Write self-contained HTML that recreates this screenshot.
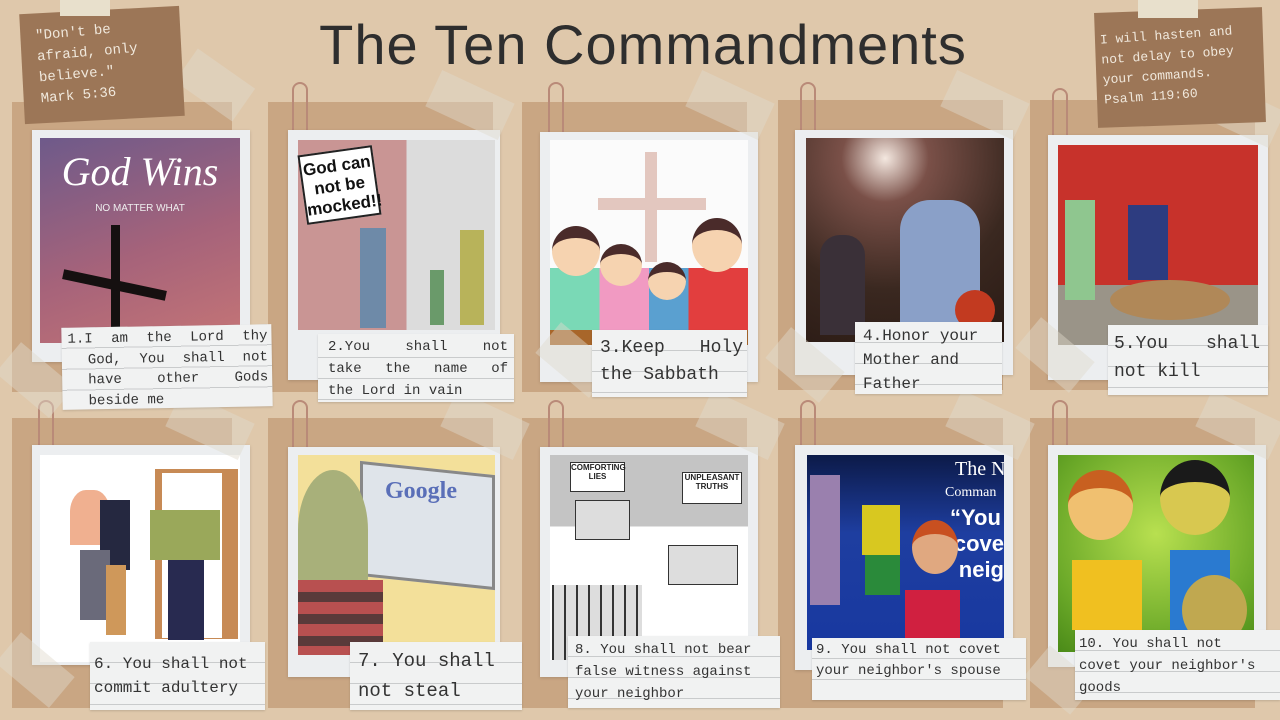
<!DOCTYPE html>
<html><head><meta charset="utf-8"><style>
*{margin:0;padding:0;box-sizing:border-box}
body{width:1280px;height:720px;overflow:hidden;background:#dfc8ab;position:relative;font-family:"Liberation Mono",monospace}
div{position:absolute}
.pn{background:#c9a683;}
.fr{background:#eceef0;box-shadow:0 1px 3px rgba(0,0,0,.15)}
.lb{background:#f1f2f2;color:#333;box-shadow:0 1px 2px rgba(0,0,0,.15);background-image:repeating-linear-gradient(to bottom,transparent 0,transparent 20px,#c9cbcc 20px,#c9cbcc 21px)}
.lb p{text-align:justify;text-align-last:justify;white-space:nowrap}
.tp{background:rgba(225,218,205,.45)}
.clip{border:2px solid #b98a78;border-radius:10px 10px 0 0;border-bottom:none}
</style></head><body>
<!-- panels -->
<div class="pn" style="left:12px;top:102px;width:220px;height:290px"></div>
<div class="pn" style="left:268px;top:102px;width:225px;height:290px"></div>
<div class="pn" style="left:522px;top:102px;width:225px;height:290px"></div>
<div class="pn" style="left:778px;top:100px;width:225px;height:290px"></div>
<div class="pn" style="left:1030px;top:100px;width:225px;height:290px"></div>
<div class="pn" style="left:12px;top:418px;width:220px;height:290px"></div>
<div class="pn" style="left:268px;top:418px;width:225px;height:290px"></div>
<div class="pn" style="left:522px;top:418px;width:225px;height:290px"></div>
<div class="pn" style="left:778px;top:418px;width:225px;height:290px"></div>
<div class="pn" style="left:1030px;top:418px;width:225px;height:290px"></div>
<!-- clips -->
<div class="clip" style="left:292px;top:82px;width:16px;height:50px"></div>
<div class="clip" style="left:548px;top:82px;width:16px;height:50px"></div>
<div class="clip" style="left:800px;top:82px;width:16px;height:50px"></div>
<div class="clip" style="left:1052px;top:88px;width:16px;height:50px"></div>
<div class="clip" style="left:38px;top:400px;width:16px;height:50px"></div>
<div class="clip" style="left:292px;top:400px;width:16px;height:50px"></div>
<div class="clip" style="left:548px;top:400px;width:16px;height:50px"></div>
<div class="clip" style="left:800px;top:400px;width:16px;height:50px"></div>
<div class="clip" style="left:1052px;top:400px;width:16px;height:50px"></div>
<!-- frames row 1 -->
<div class="fr" style="left:32px;top:130px;width:218px;height:232px"></div>
<div class="fr" style="left:288px;top:130px;width:212px;height:250px"></div>
<div class="fr" style="left:540px;top:132px;width:218px;height:250px"></div>
<div class="fr" style="left:795px;top:130px;width:218px;height:245px"></div>
<div class="fr" style="left:1048px;top:135px;width:220px;height:245px"></div>
<!-- images row1 -->
<div style="left:40px;top:138px;width:200px;height:205px;background:linear-gradient(160deg,#6e5a8a,#a6637a 55%,#c57576)"></div>
<div style="left:40px;top:148px;width:200px;color:#fff;font:italic 40px 'Liberation Serif',serif;text-align:center;white-space:nowrap">God Wins</div>
<div style="left:40px;top:203px;width:200px;color:#eee;font:10px 'Liberation Sans',sans-serif;text-align:center">NO MATTER WHAT</div>
<div style="left:111px;top:225px;width:9px;height:118px;background:#151010"></div>
<div style="left:62px;top:280px;width:105px;height:10px;background:#151010;transform:rotate(12deg)"></div>
<div style="left:298px;top:140px;width:197px;height:190px;background:linear-gradient(90deg,#c99594 0,#c99594 55%,#dcdcdc 55%)"></div>
<div style="left:302px;top:150px;width:75px;height:70px;background:#fff;border:2px solid #222;transform:rotate(-8deg);font:bold 17px 'Liberation Sans',sans-serif;color:#111;text-align:center;line-height:20px;padding-top:4px">God can not be mocked!!</div>
<div style="left:360px;top:228px;width:26px;height:100px;background:#6e8aa8"></div>
<div style="left:460px;top:230px;width:24px;height:95px;background:#b8b35a"></div>
<div style="left:430px;top:270px;width:14px;height:55px;background:#6a9a6a"></div>
<div style="left:550px;top:140px;width:198px;height:205px;background:#fbfbfb"></div>
<div style="left:645px;top:152px;width:12px;height:110px;background:#e3c7bf"></div>
<div style="left:598px;top:198px;width:108px;height:12px;background:#e3c7bf"></div>
<div style="left:550px;top:268px;width:198px;height:62px;background:linear-gradient(90deg,#7ad9b6 0,#7ad9b6 25%,#f19ac2 25%,#f19ac2 50%,#5aa0d0 50%,#5aa0d0 70%,#e23e3e 70%)"></div>
<div style="left:552px;top:226px;width:48px;height:50px;border-radius:50%;background:#f6d3b0;border-top:12px solid #4a2b2a"></div>
<div style="left:600px;top:244px;width:42px;height:42px;border-radius:50%;background:#f6d3b0;border-top:10px solid #4a2b2a"></div>
<div style="left:648px;top:262px;width:38px;height:38px;border-radius:50%;background:#f6d3b0;border-top:10px solid #4a2b2a"></div>
<div style="left:692px;top:218px;width:50px;height:54px;border-radius:50%;background:#f6d3b0;border-top:12px solid #4a2b2a"></div>
<div style="left:550px;top:330px;width:198px;height:15px;background:#a8662a"></div>
<div style="left:806px;top:138px;width:198px;height:204px;background:radial-gradient(circle at 40% 10%,#f4e8e0 0,#7a5048 20%,#3a2820 60%,#2a1a14)"></div>
<div style="left:900px;top:200px;width:80px;height:130px;background:#8aa0c8;border-radius:30px 30px 0 0"></div>
<div style="left:820px;top:235px;width:45px;height:100px;background:#3a3038;border-radius:20px 20px 0 0"></div>
<div style="left:955px;top:290px;width:40px;height:40px;border-radius:50%;background:#c23a20"></div>
<div style="left:1058px;top:145px;width:200px;height:200px;background:linear-gradient(#c7322b 0,#c7322b 70%,#9a9488 70%)"></div>
<div style="left:1065px;top:200px;width:30px;height:100px;background:#8fc68f"></div>
<div style="left:1128px;top:205px;width:40px;height:75px;background:#2d3c80"></div>
<div style="left:1110px;top:280px;width:120px;height:40px;background:#b08858;border-radius:50%"></div>
<!-- frames row2 -->
<div class="fr" style="left:32px;top:445px;width:218px;height:220px"></div>
<div class="fr" style="left:288px;top:447px;width:212px;height:230px"></div>
<div class="fr" style="left:540px;top:447px;width:218px;height:230px"></div>
<div class="fr" style="left:795px;top:445px;width:218px;height:225px"></div>
<div class="fr" style="left:1048px;top:445px;width:218px;height:222px"></div>
<!-- images row2 -->
<div style="left:40px;top:455px;width:200px;height:207px;background:#fff"></div>
<div style="left:155px;top:469px;width:83px;height:170px;background:#c78a55"></div>
<div style="left:162px;top:473px;width:60px;height:165px;background:#fff"></div>
<div style="left:150px;top:510px;width:70px;height:50px;background:#9aa85a"></div>
<div style="left:168px;top:560px;width:36px;height:80px;background:#282a50"></div>
<div style="left:70px;top:490px;width:40px;height:55px;background:#f0b090;border-radius:40% 40% 0 0"></div>
<div style="left:100px;top:500px;width:30px;height:70px;background:#252840"></div>
<div style="left:80px;top:550px;width:30px;height:70px;background:#6a6a7a"></div>
<div style="left:106px;top:565px;width:20px;height:70px;background:#cf985a"></div>
<div style="left:298px;top:455px;width:197px;height:200px;background:#f3e09a"></div>
<div style="left:360px;top:468px;width:135px;height:115px;background:#dfe4ea;border:3px solid #888;transform:skewY(6deg)"></div>
<div style="left:385px;top:478px;color:#5a6fb8;font:bold 24px 'Liberation Serif',serif">Google</div>
<div style="left:298px;top:470px;width:70px;height:120px;background:#a8b07a;border-radius:50% 50% 10% 10%"></div>
<div style="left:298px;top:580px;width:85px;height:75px;background:repeating-linear-gradient(#b85050 0,#b85050 12px,#5a3a3a 12px,#5a3a3a 22px)"></div>
<div style="left:550px;top:455px;width:198px;height:205px;background:linear-gradient(#c4c4c4 0,#c4c4c4 35%,#fff 35%)"></div>
<div style="left:570px;top:462px;width:55px;height:30px;background:#fff;border:1px solid #333;font:bold 8px 'Liberation Sans';text-align:center;color:#222">COMFORTING LIES</div>
<div style="left:682px;top:472px;width:60px;height:32px;background:#fff;border:1px solid #333;font:bold 8px 'Liberation Sans';text-align:center;color:#222">UNPLEASANT TRUTHS</div>
<div style="left:575px;top:500px;width:55px;height:40px;background:#ddd;border:1px solid #333"></div>
<div style="left:668px;top:545px;width:70px;height:40px;background:#ddd;border:1px solid #333"></div>
<div style="left:552px;top:585px;width:90px;height:75px;background:repeating-linear-gradient(90deg,#333 0,#333 2px,#ddd 2px,#ddd 12px)"></div>
<div style="left:807px;top:455px;width:197px;height:195px;background:linear-gradient(#0c1a48,#1e3ea0 40%,#1838a0)"></div>
<div style="left:955px;top:458px;color:#fff;font:20px 'Liberation Serif',serif;width:49px;overflow:hidden;white-space:nowrap">The Ni</div>
<div style="left:945px;top:485px;color:#fff;font:14px 'Liberation Serif',serif;width:59px;overflow:hidden;white-space:nowrap">Comman</div>
<div style="left:950px;top:505px;color:#fff;font:bold 22px 'Liberation Sans',sans-serif;line-height:26px;text-align:right;width:54px;overflow:hidden;white-space:nowrap">“You sh<br>cove<br>neig</div>
<div style="left:810px;top:475px;width:30px;height:130px;background:#9a80ae"></div>
<div style="left:862px;top:505px;width:38px;height:50px;background:#d8c820"></div>
<div style="left:865px;top:555px;width:35px;height:40px;background:#2a8a3a"></div>
<div style="left:912px;top:520px;width:46px;height:54px;border-radius:50%;background:#e0a880;border-top:14px solid #c85020"></div>
<div style="left:905px;top:590px;width:55px;height:60px;background:#d02040"></div>
<div style="left:1058px;top:455px;width:196px;height:197px;background:radial-gradient(circle at 50% 40%,#b8e050,#6aa828 70%,#4a8a18)"></div>
<div style="left:1068px;top:470px;width:65px;height:70px;border-radius:50%;background:#f0c070;border-top:18px solid #c86020"></div>
<div style="left:1160px;top:460px;width:70px;height:75px;border-radius:50%;background:#d8c850;border-top:22px solid #1a1a1a"></div>
<div style="left:1072px;top:560px;width:70px;height:70px;background:#f0c020"></div>
<div style="left:1170px;top:550px;width:60px;height:80px;background:#2a7ad0"></div>
<div style="left:1182px;top:575px;width:65px;height:70px;border-radius:50%;background:#c0a850"></div>
<!-- tape -->
<div class="tp" style="left:180px;top:65px;width:70px;height:40px;transform:rotate(35deg)"></div>
<div class="tp" style="left:430px;top:85px;width:80px;height:40px;transform:rotate(25deg)"></div>
<div class="tp" style="left:690px;top:85px;width:80px;height:40px;transform:rotate(25deg)"></div>
<div class="tp" style="left:945px;top:85px;width:80px;height:40px;transform:rotate(25deg)"></div>
<div class="tp" style="left:1210px;top:95px;width:70px;height:40px;transform:rotate(25deg)"></div>
<div class="tp" style="left:170px;top:405px;width:80px;height:40px;transform:rotate(25deg)"></div>
<div class="tp" style="left:445px;top:405px;width:80px;height:40px;transform:rotate(25deg)"></div>
<div class="tp" style="left:700px;top:405px;width:80px;height:40px;transform:rotate(25deg)"></div>
<div class="tp" style="left:950px;top:405px;width:80px;height:40px;transform:rotate(25deg)"></div>
<div class="tp" style="left:1200px;top:405px;width:80px;height:40px;transform:rotate(25deg)"></div>
<div class="tp" style="left:0px;top:360px;width:70px;height:40px;transform:rotate(40deg)"></div>
<div class="tp" style="left:0px;top:650px;width:70px;height:40px;transform:rotate(40deg)"></div>
<div class="tp" style="left:770px;top:345px;width:70px;height:40px;transform:rotate(40deg)"></div>
<div class="tp" style="left:1020px;top:335px;width:70px;height:40px;transform:rotate(40deg)"></div>
<div class="tp" style="left:540px;top:340px;width:70px;height:40px;transform:rotate(40deg)"></div>
<div class="tp" style="left:1030px;top:660px;width:60px;height:40px;transform:rotate(40deg)"></div>
<!-- labels -->
<div class="lb" style="left:62px;top:326px;width:210px;height:82px;font-size:14px;line-height:20.5px;padding:2px 4px 0 6px;transform:rotate(-1deg)"><p>1.I am the Lord thy</p><p style="padding-left:20px">God, You shall not</p><p style="padding-left:20px">have other Gods</p><p style="padding-left:20px;text-align-last:left">beside me</p></div>
<div class="lb" style="left:318px;top:334px;width:196px;height:68px;font-size:14px;line-height:22px;padding:2px 6px 0 10px;background-position:0 3px"><p>2.You shall not</p><p>take the name of</p><p style="text-align-last:left">the Lord in vain</p></div>
<div class="lb" style="left:592px;top:330px;width:155px;height:67px;font-size:18px;line-height:27px;padding:5px 4px 0 8px"><p>3.Keep Holy</p><p style="text-align-last:left">the Sabbath</p></div>
<div class="lb" style="left:855px;top:322px;width:147px;height:72px;font-size:16px;line-height:24px;padding:2px 4px 0 8px"><p style="text-align-last:left">4.Honor your</p><p style="text-align-last:left">Mother and</p><p style="text-align-last:left">Father</p></div>
<div class="lb" style="left:1108px;top:325px;width:160px;height:70px;font-size:18px;line-height:28px;padding:5px 8px 0 6px"><p>5.You shall</p><p style="text-align-last:left">not kill</p></div>
<div class="lb" style="left:90px;top:642px;width:175px;height:68px;font-size:16px;line-height:24px;padding:10px 4px 0 4px"><p style="text-align-last:left">6. You shall not</p><p style="text-align-last:left">commit adultery</p></div>
<div class="lb" style="left:350px;top:642px;width:172px;height:68px;font-size:19px;line-height:30px;padding:4px 4px 0 8px"><p style="text-align-last:left">7. You shall</p><p style="text-align-last:left">not steal</p></div>
<div class="lb" style="left:568px;top:636px;width:212px;height:72px;font-size:14px;line-height:22px;padding:3px 4px 0 7px"><p style="text-align-last:left">8. You shall not bear</p><p style="text-align-last:left">false witness against</p><p style="text-align-last:left">your neighbor</p></div>
<div class="lb" style="left:812px;top:638px;width:214px;height:62px;font-size:14px;line-height:21px;padding:2px 2px 0 4px"><p style="text-align-last:left">9. You shall not covet</p><p style="text-align-last:left">your neighbor's spouse</p></div>
<div class="lb" style="left:1075px;top:630px;width:205px;height:70px;font-size:14px;line-height:22px;padding:3px 2px 0 4px"><p style="text-align-last:left">10. You shall not</p><p style="text-align-last:left">covet your neighbor's</p><p style="text-align-last:left">goods</p></div>
<!-- quote notes -->
<div style="left:22px;top:10px;width:160px;height:110px;background:#9c7657;transform:rotate(-3deg)"></div>
<div style="left:60px;top:0px;width:50px;height:16px;background:#e8e0cc"></div>
<div style="left:38px;top:22px;color:#f0e8dc;font-size:14px;line-height:21px;transform:rotate(-5deg)">"Don't be<br>afraid, only<br>believe."<br>Mark 5:36</div>
<div style="left:1096px;top:10px;width:168px;height:115px;background:#9c7657;transform:rotate(-2deg)"></div>
<div style="left:1138px;top:0px;width:60px;height:18px;background:#e8e0cc"></div>
<div style="left:1102px;top:26px;color:#f0e8dc;font-size:13px;line-height:20px;transform:rotate(-4deg)">I will hasten and<br>not delay to obey<br>your commands.<br>Psalm 119:60</div>
<!-- title -->
<div style="left:298px;top:12px;width:690px;text-align:center;font:56px 'Liberation Sans',sans-serif;color:#2e2e2e;letter-spacing:1px;white-space:nowrap">The Ten Commandments</div>
</body></html>
